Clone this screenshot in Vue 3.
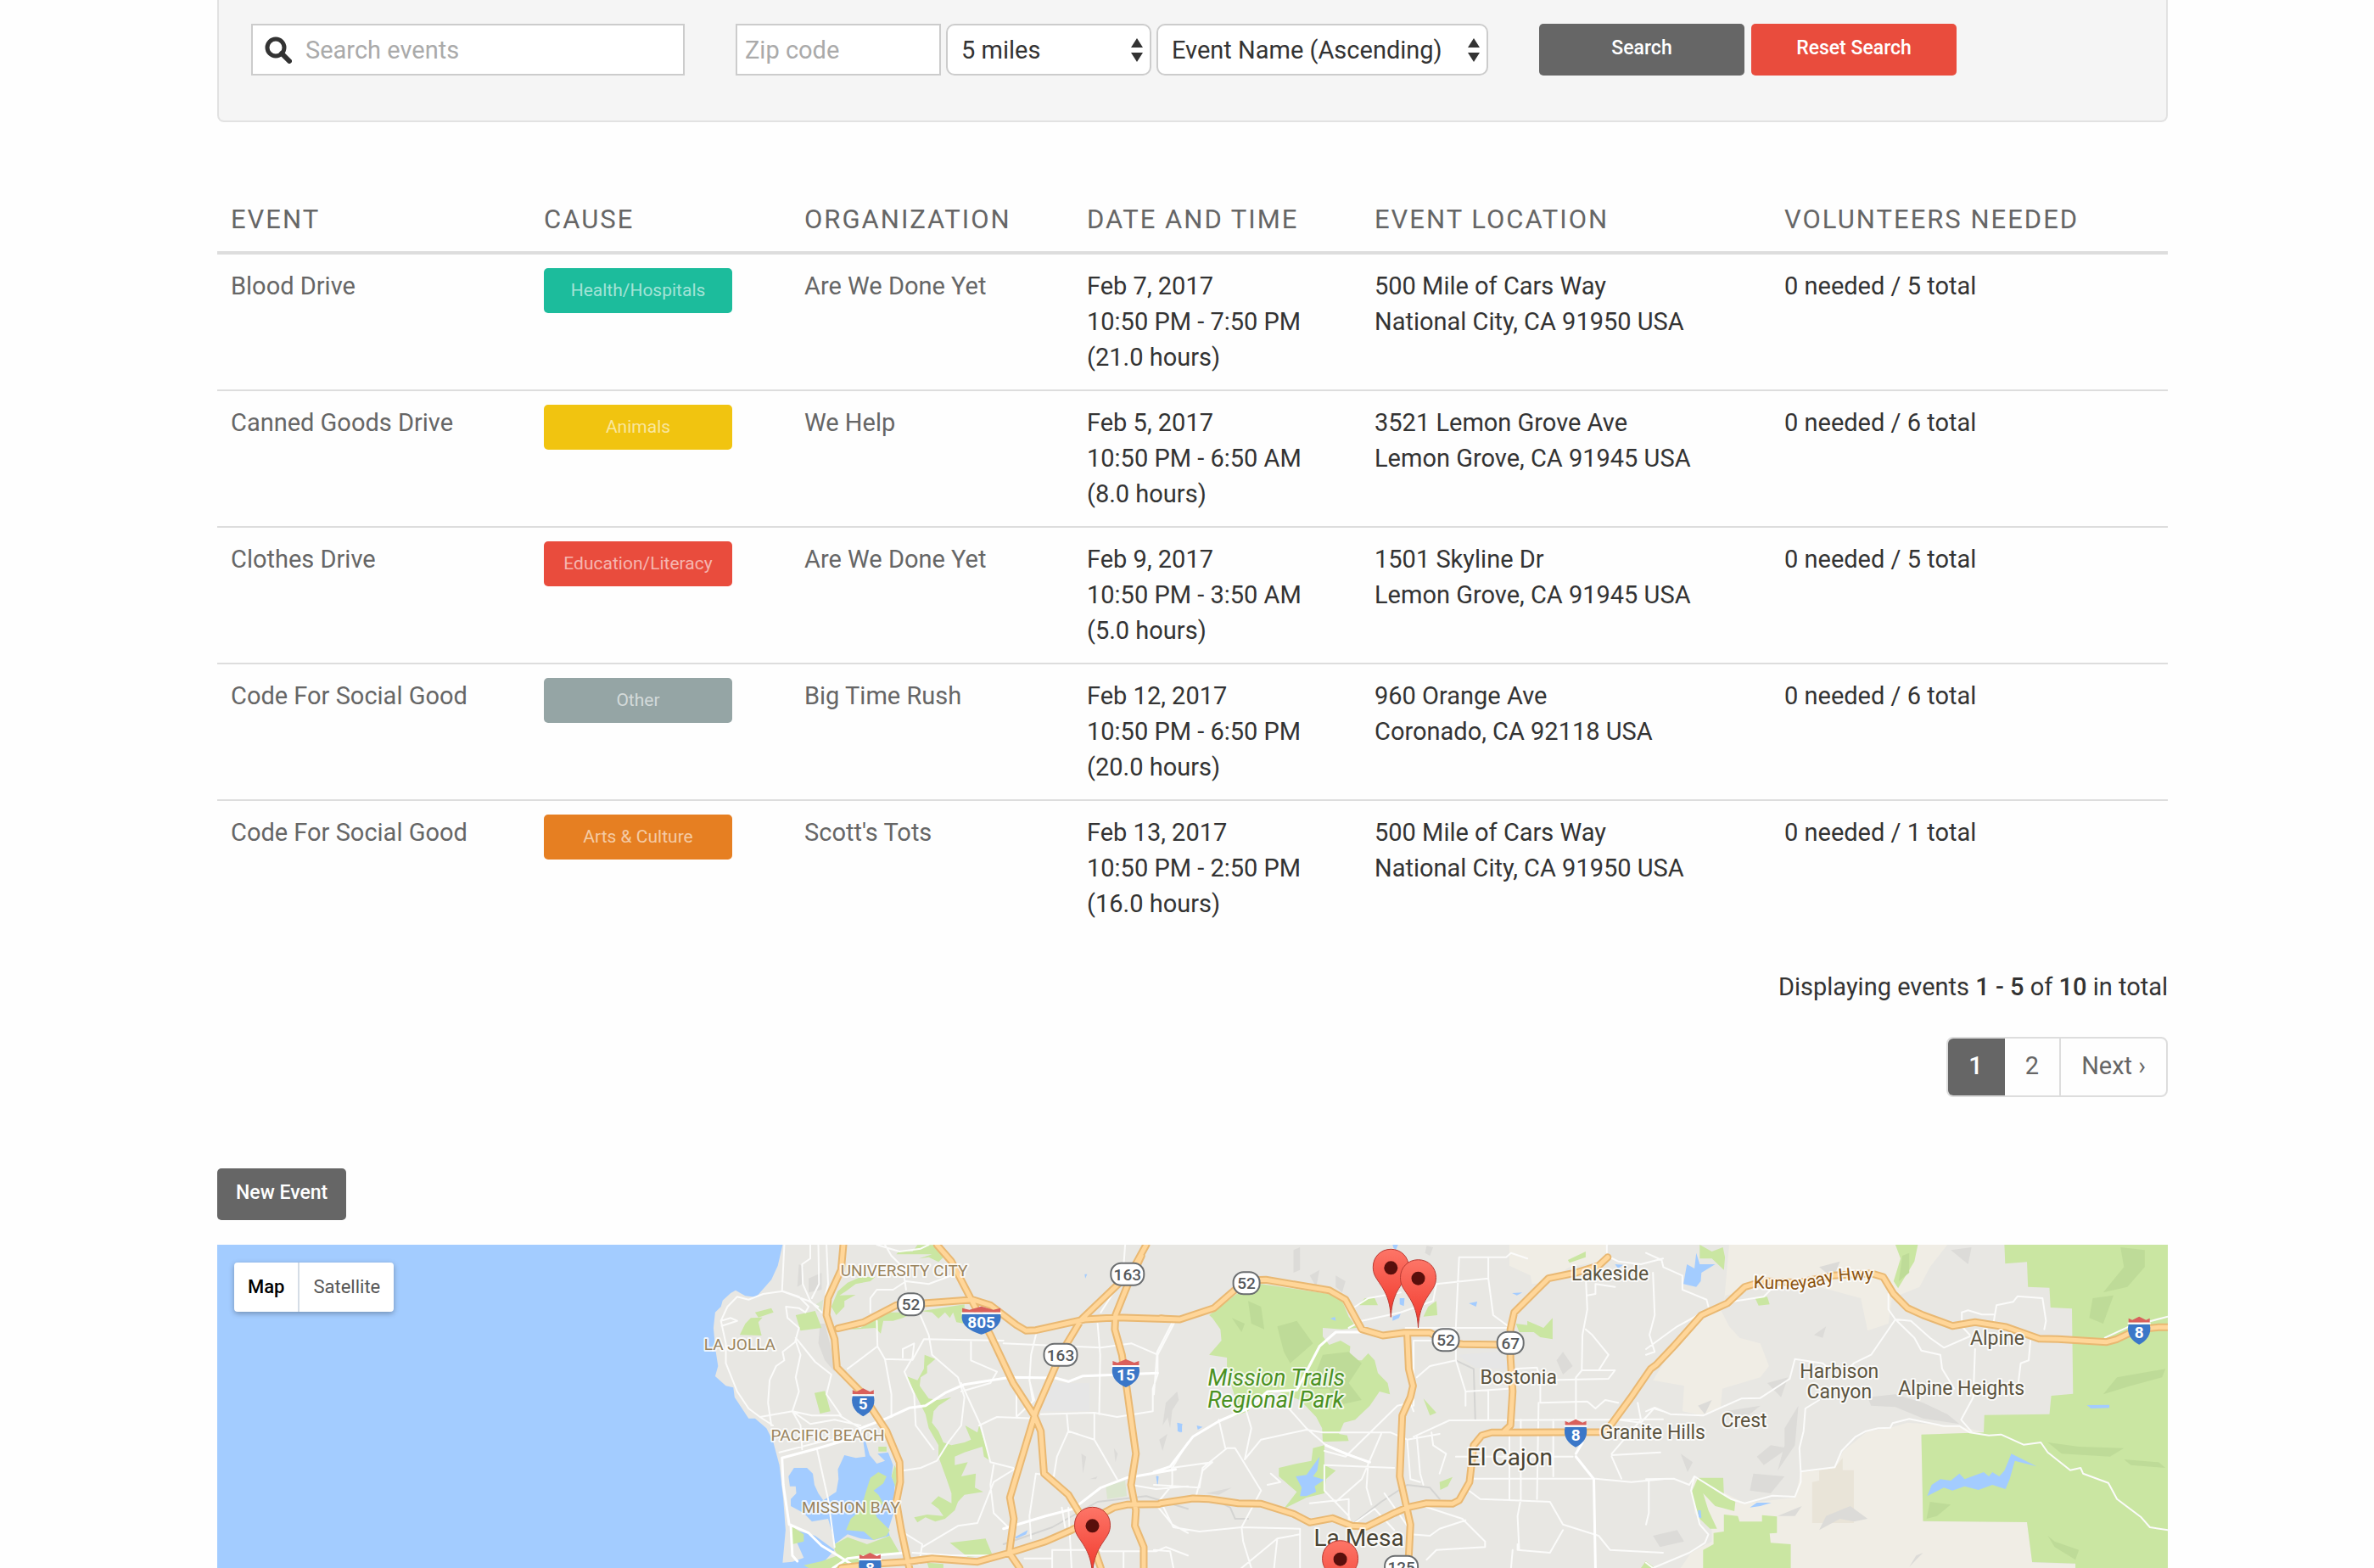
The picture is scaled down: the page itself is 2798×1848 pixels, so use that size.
<script setup>
import { ref } from 'vue'

const query = ref('')
const zip = ref('')
const distance = ref('5 miles')
const order = ref('Event Name (Ascending)')

const events = [
  { name: 'Blood Drive', cause: 'Health/Hospitals', tone: 'teal', org: 'Are We Done Yet', when: ['Feb 7, 2017', '10:50 PM - 7:50 PM', '(21.0 hours)'], where: ['500 Mile of Cars Way', 'National City, CA 91950 USA'], need: '0 needed / 5 total' },
  { name: 'Canned Goods Drive', cause: 'Animals', tone: 'yellow', org: 'We Help', when: ['Feb 5, 2017', '10:50 PM - 6:50 AM', '(8.0 hours)'], where: ['3521 Lemon Grove Ave', 'Lemon Grove, CA 91945 USA'], need: '0 needed / 6 total' },
  { name: 'Clothes Drive', cause: 'Education/Literacy', tone: 'red', org: 'Are We Done Yet', when: ['Feb 9, 2017', '10:50 PM - 3:50 AM', '(5.0 hours)'], where: ['1501 Skyline Dr', 'Lemon Grove, CA 91945 USA'], need: '0 needed / 5 total' },
  { name: 'Code For Social Good', cause: 'Other', tone: 'grey', org: 'Big Time Rush', when: ['Feb 12, 2017', '10:50 PM - 6:50 PM', '(20.0 hours)'], where: ['960 Orange Ave', 'Coronado, CA 92118 USA'], need: '0 needed / 6 total' },
  { name: 'Code For Social Good', cause: 'Arts & Culture', tone: 'orange', org: "Scott's Tots", when: ['Feb 13, 2017', '10:50 PM - 2:50 PM', '(16.0 hours)'], where: ['500 Mile of Cars Way', 'National City, CA 91950 USA'], need: '0 needed / 1 total' }
]

// The map is stored as three tiles (west, centre, east), each on its own grid.
const tiles = {
  w: { x: 544, k: 600 / 1568 },
  c: { x: 1104, k: 600 / 1568 },
  e: { x: 1684, k: 640 / 1568 }
}
const at = (t, x, y) => [Math.round((tiles[t].x + x * tiles[t].k) * 10) / 10, Math.round((y / 3 - 17) * 10) / 10]
// "w 10,20 30,40 e 5,6" -> path data; a tile letter switches the grid
const trace = (s) => {
  let t = 'w'
  const out = []
  for (const part of s.trim().split(/\s+/)) {
    if (tiles[part]) { t = part; continue }
    const [x, y] = part.split(',').map(Number)
    out.push(at(t, x, y).join(' '))
  }
  return 'M' + out.join('L')
}
const join = (list, close) => list.map((s) => trace(s) + (close ? 'Z' : '')).join('')

const land = join(['w 320,51 305,125 285,175 238,236 205,232 175,212 160,222 135,248 130,270 112,290 107,345 113,420 121,480 112,516 145,550 168,556 172,590 215,665 235,665 270,700 290,745 310,830 322,950 329,1060 320,1175 350,1172 385,1158 345,1055 420,1080 480,1130 430,1194 e 1507,1194 1507,51'], true)

const beige = join([
  'c 1095,51 1400,51 1380,110 1280,130 1210,185 1165,190 1160,160 1095,125',
  'e 240,51 870,51 820,130 790,200 710,240 700,330 640,355 620,240 500,200 300,210 230,230 215,280 240,340 270,380 330,400 355,480 330,520 220,560 215,630 165,655 105,640 110,550 20,530 70,430 150,330 225,260',
  'e 755,680 900,692 980,715 795,722 800,1030 1100,1030 1115,1175 1240,1180 1240,1194 100,1194 130,1140 190,1100 190,1060 140,1000 135,870 285,965 430,945 447,855 545,840 570,780 640,710 700,700'
], true)
const sand = join(['e 450,855 500,850 500,885 480,890 480,1035 600,1035 600,848 568,848 568,805 545,840'], true)

const parks = join([
  'w 235,290 285,275 292,290 245,308',
  'w 222,310 258,308 245,325 255,372 188,370 205,330',
  'w 360,300 420,285 440,345 375,355',
  'w 470,270 490,215 520,185 560,165 605,165 590,180 545,190 515,215 495,230 545,228 510,250 510,270 485,300 500,330',
  'w 480,345 560,345 600,315 650,290 690,290 750,285 880,262 880,330 855,325 845,290 835,310 820,290 800,312 780,290 740,285 690,310 660,320 630,320 622,365 605,345 540,350',
  'w 735,52 785,52 820,90 800,112 770,95 740,100 780,85 670,85 680,72 720,75',
  'w 418,575 450,568 467,640 435,648',
  'w 757,440 790,455 765,480 765,505 745,520 742,550 770,595 800,600 840,590 800,620 785,640 780,680 800,710 815,750 840,760 880,750 900,740 882,690 920,715 925,690 945,760 960,815 940,800 935,765 880,785 850,800 850,830 890,820 870,870 915,860 912,910 938,925 880,935 860,960 850,990 820,1020 790,1030 760,1015 735,1033 725,1015 765,1005 815,1010 800,985 777,965 800,940 840,965 840,930 825,880 800,800 800,760 770,700 760,650 725,570 700,515 735,530 755,490',
  'w 835,1105 945,1090 965,1145 890,1155',
  'w 615,765 640,765 640,782 615,782',
  'w 765,1175 815,1180 815,1194 770,1194',
  'w 655,870 665,830 675,860 670,920',
  'c 255,225 330,190 540,225 580,250 600,305 625,345 580,350 520,345 520,375 540,405 575,390 605,410 600,460 640,460 660,435 680,460 690,505 720,540 727,580 695,570 665,620 620,670 585,680 570,720 595,725 600,745 520,748 518,700 500,660 450,600 380,570 320,590 290,640 245,658 250,590 225,500 225,450 170,440 208,390 205,350 180,310 170,300',
  'c 490,770 525,760 525,830 560,850 530,880 525,930 470,945 400,985 440,925 385,870 385,840 440,825 485,815',
  'c 630,265 650,240 680,240 690,265',
  'c 830,305 845,270 870,250 873,300',
  'c 1115,330 1150,335 1150,320 1200,345 1228,310 1228,385 1190,378 1170,360 1125,360',
  'c 830,595 870,645 850,655',
  'c 880,890 920,872 905,905 882,918',
  'c 1275,105 1330,75 1330,95 1280,115',
  'c 1515,1170 1545,1194 1500,1194',
  'e 1035,51 1507,51 1507,1194 1240,1194 1240,1178 1115,1173 1100,1032 800,1028 795,722 975,715 977,653 1165,650 1170,585 1233,578 1230,277 1168,273 1165,203 1103,200 1100,112 1037,118',
  'e 155,51 190,75 222,60 228,95 225,140 190,100 155,100',
  'e 720,51 785,51 775,110 728,205 715,180 735,100',
  'e 195,1070 225,1065 225,1005 265,1010 270,1030 335,1030 335,1007 378,1012 378,1070 357,1072 360,1105 418,1110 418,1194 165,1194 165,1130 195,1110',
  'e 150,875 223,875 225,935 258,960 255,993 200,975 165,930 180,990 205,1055 185,1055 155,1020 130,930',
  'e 315,240 350,235 357,262 325,266'
], true)
const paleParks = join(['w 1315,905 1375,885 1380,940 1320,950', 'w 422,262 445,245 440,290 425,285'], true)
const greyLots = join(['w 1120,540 1265,540 1265,640 1110,640', 'c 935,440 1060,430 1090,470 1090,490 990,485'], true)

const islands = join([
  'w 615,855 640,870 630,895 600,920 615,935 630,965 600,985 610,1015 650,1060 640,1080 600,1095 570,1065 515,1060 530,1020 560,990 575,930 590,875',
  'w 480,1110 520,1085 580,1110 650,1080 680,1140 600,1150 560,1170 545,1194 400,1194 385,1184 440,1170 490,1150 480,1130',
  'w 345,1045 385,1075 385,1100 350,1110'
], true)

const water = join([
  'w 338,870 355,840 395,840 413,860 418,900 430,930 445,955 485,925 492,880 490,845 510,795 545,805 575,800 568,745 575,745 588,795 610,825 635,815 612,790 645,785 660,830 655,870 665,900 662,1000 645,1060 650,1080 600,1095 560,1090 520,1075 480,1110 470,1060 460,1020 410,1030 385,1000 345,975 345,950 362,930 360,905 342,905',
  'w 1535,680 1550,690 1550,715 1537,705', 'w 1470,870 1478,870 1475,905', 'w 1250,155 1258,155 1252,170',
  'w 1035,1085 1075,1060 1070,1075 1040,1090',
  'c 510,800 503,850 490,870 525,882 495,905 500,925 470,940 450,940 455,910 437,870 470,865',
  'c 735,305 760,295 755,310 735,320', 'c 757,240 772,240 770,268 757,262', 'c 735,51 752,51 745,70 738,62',
  'c 970,258 996,252 992,270', 'c 1103,222 1135,220 1118,230', 'c 73,680 88,685 82,715 73,710', 'c 132,690 150,695 135,705',
  'c 8,868 14,870 10,900', 'c 543,312 558,306 560,320', 'c 1420,120 1445,122 1430,135',
  'e 812,940 825,900 850,880 880,885 905,860 920,880 975,855 990,870 1000,855 1020,870 1035,850 1055,790 1128,835 1065,815 1050,880 1038,915 1000,900 960,918 920,905 885,920 860,910',
  'e 1273,618 1338,617 1338,628 1285,630', 'e 118,120 140,135 145,80 155,120 200,120 160,150 158,180 145,200 108,190',
  'e 300,980 320,963 362,963 330,975', 'e 150,990 158,990 160,1018 152,1015'
], true)

const shade = join([
  'c 520,440 600,430 640,470 600,540 640,600 560,620 540,560 480,560 500,500', 'c 290,250 330,270 340,350 300,330', 'c 380,340 440,320 490,400 420,470 400,430', 'c 240,310 280,330 270,360',
  'e 1370,60 1440,70 1440,130 1390,200 1320,220 1380,130', 'e 1290,240 1350,230 1320,330 1280,310', 'e 1320,580 1360,520 1500,490 1490,520 1400,550',
  'e 1160,750 1250,765 1380,770 1340,800 1200,790', 'e 1380,810 1480,820 1500,840 1400,830', 'e 740,90 760,80 760,150 730,180', 'e 1160,1080 1180,1100 1250,1130 1240,1165 1180,1120', 'e 820,960 880,970 840,1010 810,1020'
], true)
const relief = join([
  'w 435,330 450,330 470,420 480,500 450,460 430,400', 'w 370,120 385,130 380,190 365,200', 'w 400,170 440,150 440,210 400,220', 'w 1500,610 1535,570 1540,600 1490,690', 'w 1480,740 1505,720 1490,780', 'w 1340,770 1352,790 1345,820', 'w 1240,790 1255,800 1245,860', 'w 1265,880 1290,870 1285,880',
  'c 430,70 450,60 450,140 430,150', 'c 480,160 510,140 500,200', 'c 560,160 590,180 580,220 560,200', 'c 1240,460 1260,430 1290,480 1260,510', 'c 160,930 240,910 200,935', 'c 40,650 60,600 50,700', 'c 840,55 860,60 850,90 835,80',
  'e 400,700 440,620 430,760 380,850 400,760', 'e 640,590 720,580 800,610 870,650 905,685 800,665 720,625 650,620', 'e 320,800 360,760 410,770 340,830', 'e 310,860 400,870 360,930 300,920', 'e 520,1010 590,975 640,1020 600,1030 560,1020 500,1060', 'e 230,640 330,620 280,670', 'e 150,620 190,600 170,650', 'e 380,1010 450,975 430,1010', 'e 20,1080 90,1060 110,1100 40,1120', 'e 500,130 560,110 540,170', 'e 880,70 940,60 930,120', 'e 350,540 410,520 390,590', 'e 100,790 135,820 120,855', 'e 780,1150 800,1140 760,1190', 'e 485,370 520,340 510,380'
], true)

const streets = join([
  'w 325,51 318,215 400,250 430,270', 'w 405,51 405,100 380,120 382,190 405,250 440,290', 'w 430,51 432,190 410,240', 'w 455,51 460,190 450,240',
  'w 132,338 180,320 160,310 130,320 150,270 180,235 215,245 260,225 320,215 370,235 400,270 390,290 370,275 330,270 335,310 370,345 358,395 320,430 325,460 300,480 280,530 275,610 285,690',
  'w 130,320 145,400 145,470 180,570 215,630 250,660 290,690', 'w 250,660 350,640 410,655 495,655 560,700', 'w 360,390 375,440 360,520 370,570 350,640 375,690 380,775', 'w 360,380 420,465 470,510 455,580 500,655', 'w 350,640 405,685 480,670 560,690',
  'w 310,785 430,750 570,720', 'w 425,770 460,950 480,1120', 'w 610,320 612,410 520,490', 'w 612,410 635,455 720,458 755,385 1000,390', 'w 635,455 655,580 655,660', 'w 740,290 770,370 780,440 860,520 880,590 870,690 830,750 795,815 745,840 690,850',
  'w 690,450 690,420 725,400 720,450 695,500 725,580 730,690 785,775', 'w 590,290 590,240 610,210 660,210 700,180 770,190 840,160', 'w 635,51 655,90 690,130 700,210', 'w 610,51 680,75 745,65 770,51',
  'w 900,390 900,460 980,500 960,540 870,570', 'w 870,540 930,690 960,820 1030,840', 'w 1100,370 1085,440 1080,530 1090,600', 'w 1000,400 1300,415 1395,400 1475,440', 'w 1290,330 1298,440 1295,650', 'w 1300,290 1350,200 1370,130 1375,51',
  'w 925,690 980,660 1095,665', 'w 1115,650 1280,645 1350,660 1460,640 1460,560 1475,510', 'w 1280,645 1280,740 1350,880', 'w 1195,650 1200,710 1280,740', 'w 1200,710 1165,800 1155,870 1100,860 1080,1010 1085,1090', 'w 1475,510 1475,440 1525,330',
  'w 1080,530 1095,600 1040,660 1040,560', 'w 970,830 960,900 970,1000 1015,1050', 'w 1393,900 1470,915 1568,905', 'w 1568,750 1520,840 1520,900 1470,970 1520,1040 1568,1070', 'w 680,1060 750,1110 740,1180', 'w 750,1120 860,1045 920,1035 970,890 1040,840', 'w 1150,1194 1150,1130 1300,1130', 'w 1300,1135 1470,1135 1500,1120 1568,1150', 'w 1065,1160 1150,1160', 'w 1200,980 1210,1194', 'w 1370,1135 1370,1194', 'w 1180,980 1190,1050', 'w 720,1140 840,1150 1000,1150',
  'c 0,580 10,430 55,330', 'c 55,840 180,820 150,850 130,940', 'c 0,900 140,910 150,840 225,770 250,770 330,920 270,1050 275,1100 300,1194', 'c 30,980 60,1050 140,1065 270,1050 450,1055', 'c 200,670 220,770', 'c 280,620 300,700 280,810', 'c 400,610 470,700 530,760 660,820 655,910 670,970',
  'c 520,715 470,705 330,740 280,810', 'c 520,715 730,715 780,740 880,720', 'c 525,780 590,800 750,620 790,610 800,640', 'c 530,830 740,840', 'c 525,830 525,920 600,1010 610,1050', 'c 560,960 640,880 700,720', 'c 480,965 600,950 600,1050', 'c 350,900 390,890 360,860', 'c 780,740 790,880 820,890', 'c 810,730 820,860 830,900', 'c 855,715 860,760 900,790 880,860',
  'c 640,320 760,290 860,250 870,190 1030,170', 'c 620,270 660,240 760,220', 'c 930,340 940,95 1085,95 1100,80 1150,100', 'c 1030,95 1030,170 1045,300 1098,345', 'c 640,320 600,345', 'c 775,345 1095,345', 'c 800,390 860,390', 'c 800,620 800,390', 'c 810,520 850,480 930,460 930,350', 'c 930,460 960,570 960,620', 'c 960,570 1090,560', 'c 1030,570 1030,670', 'c 800,730 910,672 1568,668',
  'c 1110,490 1180,485 1190,530 1400,525 1420,495 1318,495', 'c 1190,530 1190,610 1335,605 1360,630 1390,600 1430,610', 'c 1185,610 1180,950', 'c 1230,670 1230,870', 'c 1300,520 1300,670', 'c 1095,700 1095,950', 'c 1130,670 1130,950 1120,1010 1125,1130', 'c 930,800 1290,800', 'c 970,920 1005,950 1220,960 1260,1040 1370,1080 1405,1130 1568,1140', 'c 980,878 1360,878 1470,890 1568,880', 'c 1410,800 1440,878', 'c 1410,795 1560,785',
  'c 1330,160 1335,280 1320,370 1318,495 1300,520', 'c 1330,350 1350,370 1400,440 1370,495', 'c 1335,230 1360,225 1360,190 1420,200', 'c 1395,51 1395,90 1430,110 1500,120 1568,100', 'c 830,975 950,1020 1020,1100 1020,1120 870,1130 840,1165', 'c 790,1075 850,1080 880,1055 960,1025', 'c 1120,1110 1120,1130 1220,1140 1260,1060', 'c 710,930 790,1060', 'c 600,1050 680,985 740,1060', 'c 0,1130 50,1135 60,1194', 'c 270,1194 380,1090 450,1075', 'c 450,1055 450,1194', 'c 380,1090 370,1194', 'c 1105,1130 1100,1194', 'c 1430,670 1500,680 1540,630 1568,640', 'c 1490,610 1500,670 1410,790',
  'e 0,80 45,105 50,130 105,160 105,210 175,245 180,270', 'e 20,150 25,300 10,370 25,430 0,440', 'e 0,420 90,340 150,300', 'e 180,280 260,250 340,235 360,210 440,190', 'e 0,640 25,627 70,650 165,655 275,595 330,593 415,525 430,455 510,470 560,520 600,470 650,440 720,315 765,320 820,380 860,415 935,375',
  'e 700,225 700,280 720,315 775,380 795,425 850,440 855,490 890,560', 'e 950,420 945,590 910,670 940,712', 'e 1110,390 1105,460 1082,470 1075,540', 'e 1150,350 1155,320 1145,240 1073,233 1060,253 1012,265 1003,330', 'e 1003,298 970,298 930,283 912,290 912,340 935,370', 'e 500,600 460,630 455,710 443,770 447,855 447,890 430,942 365,938 285,965 245,950 140,870 125,900 80,878 0,880', 'e 447,853 545,838 565,780 605,730 635,710 670,700 705,698 712,682 760,667 860,692 905,692 935,715 990,725 1025,722 1090,758 1140,750 1160,785 1225,848 1255,840 1262,860 1335,893 1360,950 1430,1015 1455,1050 1507,1060', 'e 140,870 130,920 155,1040 180,1075 170,1105 125,1140 20,1194 0,1175', 'e 8,880 8,1000 0,1040', 'e 1325,380 1390,343 1460,320 1507,305'
])
const avenues = join([
  'w 318,805 430,770 550,730 560,700 640,665 710,628 760,620 820,575 880,545 1020,520 1160,522 1200,535 1245,515 1475,505', 'w 1000,1055 1130,1010 1215,985 1300,910 1380,875 1530,845',
  'w 345,1042 400,1070 440,1115 490,1150 545,1190', 'w 318,805 322,900 340,1040', 'w 345,1042 350,1150 365,1170', 'w 475,1194 520,1160 600,1150 700,1140',
  'c 0,855 50,835 120,730 200,675 290,630 350,570 440,565 510,410 560,360 640,360', 'c 530,760 590,790 665,820', 'c 1300,800 1355,880 1360,1194', 'c 1300,790 1320,750'
])
const rails = join(['w 1000,1110 1150,1050 1290,960 1440,940 1568,985', 'c 200,960 235,980 250,1020 290,1020', 'c 610,1040 700,960 780,900 850,910 880,950', 'c 930,460 985,490 990,670'])

const highways = join([
  'w 507,51 500,140 460,240 455,300 480,385 487,485 560,570 600,640 640,710 680,820 682,890 670,960 685,1060 710,1194',
  'w 490,347 570,325 670,265 800,254 905,245 960,265 1040,335 1070,355 1100,353 1250,315 1350,308 1540,315 c 20,312 80,315 185,275 255,205 300,176 345,175 540,212 590,245 640,350 705,372 770,362 850,362 900,395 950,403 1098,405',
  'w 795,51 840,110 910,265 960,370 1030,540 1095,655 1115,710 1125,860 1200,935 1250,1030 1300,1194',
  'w 1440,51 1395,145 1240,315 1180,430 1100,640 1020,945 1032,1020 1018,1140 1050,1194',
  'w 1425,90 1380,200 1345,300 1343,350 1365,440 1380,560 1408,790 1393,900 1408,990 1405,1045 1432,1120 1432,1194',
  'w 500,1194 600,1180 700,1172 780,1160 920,1172 1020,1140 1130,1100 1210,1060 1340,980 1380,970 1480,968 c 20,965 120,948 170,950 260,965 330,967 430,1003 480,1033 550,1018 610,1045 655,1048 740,1000 780,980 840,965 920,967 940,955 972,890 985,760 1010,725 1040,715 1380,713 1400,700 1470,590 1530,490 e 30,475 80,410 160,300 235,258 285,200 340,180 440,185 540,160 650,152 685,165 715,225 755,275 800,300 885,338 950,325 1040,342 1135,383 1190,385 1330,395 1360,385 1420,350 1480,343 1515,343',
  'c 1398,95 1370,125 1300,150 1215,170 1110,290 1098,350 1098,450 1105,570 1098,690 1075,715',
  'c 780,362 785,490 798,550 790,590 765,655 757,870 790,1040 785,1150'
])

const spot = (t, x, y) => { const [px, py] = at(t, x, y); return { x: px, y: py } }
const labels = [
  { text: 'UNIVERSITY CITY', kind: 'area', ...spot('w', 694, 162) },
  { text: 'LA JOLLA', kind: 'area', ...spot('w', 188, 422) },
  { text: 'PACIFIC BEACH', kind: 'area', ...spot('w', 459, 743) },
  { text: 'MISSION BAY', kind: 'area', ...spot('w', 530, 1000) },
  { text: 'Mission Trails', kind: 'park', ...spot('c', 377, 548) },
  { text: 'Regional Park', kind: 'park', ...spot('c', 375, 627) },
  { text: 'Lakeside', kind: 'town', ...spot('c', 1405, 176) },
  { text: 'Bostonia', kind: 'town', ...spot('c', 1123, 542) },
  { text: 'El Cajon', kind: 'city', ...spot('c', 1096, 832) },
  { text: 'La Mesa', kind: 'city', ...spot('c', 631, 1115) },
  { text: 'Granite Hills', kind: 'town', ...spot('e', 19, 738) },
  { text: 'Crest', kind: 'town', ...spot('e', 283, 695) },
  { text: 'Harbison', kind: 'town', ...spot('e', 558, 523) },
  { text: 'Canyon', kind: 'town', ...spot('e', 558, 593) },
  { text: 'Alpine Heights', kind: 'town', ...spot('e', 911, 582) },
  { text: 'Alpine', kind: 'town', ...spot('e', 1014, 405) }
]
const stateRoutes = [
  { n: '52', w: 33, ...spot('w', 715, 262) }, { n: '163', w: 41, ...spot('w', 1382, 155) }, { n: '163', w: 41, ...spot('w', 1176, 440) },
  { n: '52', w: 33, ...spot('c', 285, 187) }, { n: '52', w: 33, ...spot('c', 899, 388) }, { n: '67', w: 33, ...spot('c', 1098, 398) },
  { n: '125', w: 41, ...spot('c', 762, 1190) }
]
const interstates = [
  { n: '805', w: 47, ...spot('w', 932, 320) }, { n: '15', w: 33, ...spot('w', 1377, 507) }, { n: '5', w: 27, ...spot('w', 568, 610) },
  { n: '8', w: 27, ...spot('w', 589, 1191) }, { n: '8', w: 27, ...spot('c', 1299, 719) }, { n: '8', w: 27, ...spot('e', 1424, 356) }
]
const crown = (w) => { const h = w / 2; return `M${-h + 1} -10L${-h + 1} -15L${-h * 0.6} -13L${-h * 0.3} -15L0 -17L${h * 0.3} -15L${h * 0.6} -13L${h - 1} -15L${h - 1} -10Z` }
const shield = (w) => { const h = w / 2; return `M${-h + 1} -8H${h - 1}C${h + 2} 4 ${h * 0.6} 12 0 16C${-h * 0.6} 12 ${-h - 2} 4 ${-h + 1} -8Z` }
const pins = [spot('w', 1274, 1045), spot('c', 730, 133), spot('c', 814, 170), spot('c', 574, 1163)]
const hwyPath = trace('e 310,205 370,207 430,209 480,202 540,183 600,176 660,176')
</script>

<template>
  <main class="page">
    <form class="filters" @submit.prevent>
      <label class="search-box">
        <svg class="glass" viewBox="0 0 32 32" aria-hidden="true">
          <circle cx="13" cy="13" r="10" fill="none" stroke="#333" stroke-width="5" />
          <path d="M20 20L29 29" stroke="#333" stroke-width="6" stroke-linecap="round" />
        </svg>
        <input v-model="query" type="text" placeholder="Search events" aria-label="Search events" />
      </label>
      <div class="group">
        <input v-model="zip" class="zip" type="text" placeholder="Zip code" aria-label="Zip code" />
        <div class="pick">
          <select v-model="distance" class="miles" aria-label="Distance">
            <option>5 miles</option>
            <option>10 miles</option>
          </select>
          <svg class="arrows" viewBox="0 0 14 28" aria-hidden="true"><path d="M7 0L14 11H0ZM0 17H14L7 28Z" fill="#333" /></svg>
        </div>
        <div class="pick">
          <select v-model="order" class="order" aria-label="Sort order">
            <option>Event Name (Ascending)</option>
            <option>Event Name (Descending)</option>
          </select>
          <svg class="arrows" viewBox="0 0 14 28" aria-hidden="true"><path d="M7 0L14 11H0ZM0 17H14L7 28Z" fill="#333" /></svg>
        </div>
      </div>
      <div class="group actions">
        <button class="btn wide" type="submit">Search</button>
        <button class="btn wide danger" type="reset">Reset Search</button>
      </div>
    </form>

    <table class="events">
      <colgroup>
        <col class="c-event" /><col class="c-cause" /><col class="c-org" /><col class="c-date" /><col class="c-place" /><col />
      </colgroup>
      <thead>
        <tr>
          <th>EVENT</th><th>CAUSE</th><th>ORGANIZATION</th><th>DATE AND TIME</th><th>EVENT LOCATION</th><th>VOLUNTEERS NEEDED</th>
        </tr>
      </thead>
      <tbody>
        <tr v-for="(e, i) in events" :key="i">
          <td><a href="#">{{ e.name }}</a></td>
          <td><span class="cause" :class="e.tone">{{ e.cause }}</span></td>
          <td><a href="#">{{ e.org }}</a></td>
          <td><div v-for="l in e.when" :key="l">{{ l }}</div></td>
          <td><div v-for="l in e.where" :key="l">{{ l }}</div></td>
          <td>{{ e.need }}</td>
        </tr>
      </tbody>
    </table>

    <p class="summary">Displaying events <b>1 - 5</b> of <b>10</b> in total</p>
    <nav class="pager" aria-label="Pages">
      <a class="current" href="#">1</a><a href="#">2</a><a href="#">Next ›</a>
    </nav>

    <button class="btn new" type="button">New Event</button>

    <section class="map" aria-label="Event map">
      <svg class="chart" viewBox="0 0 2299 381" preserveAspectRatio="xMidYMin slice">
        <defs>
          <linearGradient id="pinFill" x1="0" y1="0" x2="0" y2="1">
            <stop offset="0" stop-color="#fd7567" /><stop offset="1" stop-color="#f0372b" />
          </linearGradient>
          <path id="hwyLine" :d="hwyPath" />
        </defs>
        <rect width="2299" height="381" fill="#a3ccff" />
        <path :d="land" fill="#e8e7e3" />
        <path :d="beige" fill="#f0ede5" />
        <path :d="sand" fill="#e9e4d8" />
        <path :d="greyLots" fill="#e6e6e6" />
        <path :d="relief" fill="#dcdbd8" />
        <path :d="parks" fill="#cae6a2" />
        <path :d="paleParks" fill="#dbe6cf" />
        <path :d="shade" fill="#bedb98" />
        <path :d="water" fill="#a3ccff" />
        <path :d="islands" fill="#cae6a2" />
        <g fill="none" stroke-linejoin="round" stroke-linecap="round">
          <path :d="rails" stroke="#d4d4d2" stroke-width="2" />
          <path :d="streets" stroke="#fbfbfa" stroke-width="2" />
          <path :d="avenues" stroke="#fff" stroke-width="3" />
          <path :d="highways" stroke="#e9b872" stroke-width="9" />
          <path :d="highways" stroke="#ffd699" stroke-width="5" />
        </g>
        <g class="labels">
          <text v-for="l in labels" :key="l.text" :x="l.x" :y="l.y" :class="l.kind">{{ l.text }}</text>
          <text class="road"><textPath href="#hwyLine">Kumeyaay Hwy</textPath></text>
        </g>
        <g v-for="(r, i) in stateRoutes" :key="'s' + i" class="route" :transform="`translate(${r.x} ${r.y})`">
          <rect :x="-r.w / 2 + 1" y="-13" :width="r.w - 2" height="26" rx="12" fill="#fff" stroke="#6b6e70" stroke-width="2" />
          <text y="7">{{ r.n }}</text>
        </g>
        <g v-for="(r, i) in interstates" :key="'i' + i" class="route us" :transform="`translate(${r.x} ${r.y})`">
          <path :d="crown(r.w)" fill="#d9605c" />
          <path :d="shield(r.w)" fill="#3b77c8" />
          <path :d="`M${-r.w / 2} -9H${r.w / 2}`" stroke="#fff" stroke-width="2" />
          <text y="8">{{ r.n }}</text>
        </g>
        <g v-for="(p, i) in pins" :key="'p' + i" :transform="`translate(${p.x} ${p.y})`">
          <path d="M0 58C-1 36 -8 26 -14 17C-18 11 -21 7 -21 -1C-21 -13 -12 -22 0 -22C12 -22 21 -13 21 -1C21 7 18 11 14 17C8 26 1 36 0 58Z" fill="url(#pinFill)" stroke="#b93a32" stroke-width="1" />
          <circle r="8" fill="#590f0c" />
        </g>
      </svg>
      <div class="map-type">
        <button class="on" type="button">Map</button>
        <button type="button">Satellite</button>
      </div>
    </section>
  </main>
</template>

<style>
body {
  margin: 0;
  background: #fefefe;
}
</style>

<style scoped>
.page,
.page * {
  box-sizing: border-box;
}
.page {
  padding: 0 243px 0 256px;
  font-family: Roboto, "Liberation Sans", sans-serif;
  font-size: 29px;
  line-height: 42px;
  color: #333;
}
input,
select,
button {
  font: inherit;
  color: inherit;
  margin: 0;
}
a {
  color: #666;
  text-decoration: none;
}
.filters {
  display: flex;
  gap: 60px;
  padding: 28px 38px 53px;
  background: #f5f5f5;
  border: 2px solid #e2e2e2;
  border-top: 0;
  border-radius: 0 0 8px 8px;
}
.group {
  display: flex;
  gap: 6px;
}
.group.actions {
  gap: 8px;
}
.search-box {
  display: flex;
  align-items: center;
  gap: 16px;
  width: 511px;
  height: 61px;
  padding: 0 14px;
  background: #fff;
  border: 2px solid #ccc;
}
.glass {
  width: 32px;
  height: 32px;
  flex: none;
}
.search-box input {
  flex: 1;
  min-width: 0;
  border: 0;
  padding: 0;
  outline: 0;
  background: none;
}
::placeholder {
  color: #aaa;
  opacity: 1;
}
.zip {
  width: 242px;
  height: 61px;
  padding: 0 9px;
  background: #fff;
  border: 2px solid #ccc;
}
.pick {
  position: relative;
}
select {
  appearance: none;
  height: 61px;
  padding: 0 16px;
  background: #fff;
  border: 2px solid #ccc;
  border-radius: 10px;
}
.miles {
  width: 242px;
}
.order {
  width: 391px;
}
.arrows {
  position: absolute;
  right: 10px;
  top: 17px;
  width: 14px;
  height: 28px;
  pointer-events: none;
}
.btn {
  height: 61px;
  padding: 0 22px 4px;
  border: 0;
  border-radius: 5px;
  background: #666;
  color: #fff;
  font-size: 23px;
  font-weight: 500;
  line-height: 30px;
}
.wide {
  width: 242px;
  padding: 0 0 4px;
}
.danger {
  background: #e94c3d;
}
.events {
  width: 100%;
  margin-top: 78px;
  table-layout: fixed;
  border-collapse: separate;
  border-spacing: 0;
}
.c-event {
  width: 369px;
}
.c-cause {
  width: 307px;
}
.c-org {
  width: 333px;
}
.c-date {
  width: 339px;
}
.c-place {
  width: 483px;
}
th {
  padding: 16px;
  text-align: left;
  font-size: 31px;
  font-weight: 400;
  letter-spacing: 2px;
  color: #666;
  white-space: nowrap;
  border-bottom: 4px solid #ddd;
}
td {
  padding: 16px 16px 17px;
  vertical-align: top;
  border-bottom: 2px solid #ddd;
}
tbody tr:last-child td {
  border-bottom: 0;
}
.cause {
  display: block;
  width: 222px;
  height: 53px;
  border-radius: 5px;
  font-size: 21px;
  line-height: 52px;
  text-align: center;
  color: rgba(255, 255, 255, 0.6);
}
.teal {
  background: #1cbc9c;
}
.yellow {
  background: #f1c410;
}
.red {
  background: #e94c3d;
}
.grey {
  background: #95a5a5;
}
.orange {
  background: #e67f22;
}
.summary {
  margin: 39px 0 38px;
  text-align: right;
}
.summary b {
  font-weight: 500;
}
.pager {
  display: flex;
  width: max-content;
  margin-left: auto;
  border: 2px solid #ddd;
  border-radius: 8px;
  overflow: hidden;
}
.pager a {
  padding: 11px 24px 14px;
  border-left: 2px solid #ddd;
}
.pager a.current {
  margin: -2px 0 -2px -2px;
  padding: 13px 26px 16px;
  border: 0;
  background: #666;
  color: #fff;
  font-weight: 500;
}
.pager a.current + a {
  border-left: 0;
}
.new {
  display: block;
  margin: 84px 0 29px;
}
.map {
  position: relative;
  height: 381px;
  overflow: hidden;
}
.chart {
  display: block;
  width: 100%;
  height: 100%;
}
.labels text {
  text-anchor: middle;
  paint-order: stroke;
  stroke: rgba(255, 255, 255, 0.8);
  stroke-width: 4px;
  stroke-linejoin: round;
}
.labels .area {
  font-size: 19px;
  fill: #9a845e;
}
.labels .park {
  font-size: 27px;
  font-style: italic;
  fill: #4b9123;
}
.labels .town {
  font-size: 23px;
  fill: #5c5440;
}
.labels .city {
  font-size: 28px;
  fill: #4a4433;
}
.labels .road {
  text-anchor: start;
  font-size: 21px;
  fill: #8b5412;
}
.route text {
  text-anchor: middle;
  font-size: 19px;
  font-weight: 500;
  fill: #55585b;
}
.route.us text {
  font-weight: 700;
  fill: #fff;
}
.map-type {
  position: absolute;
  left: 20px;
  top: 21px;
  display: flex;
  border-radius: 4px;
  background: #fff;
  box-shadow: 0 2px 6px rgba(0, 0, 0, 0.3);
}
.map-type button {
  height: 58px;
  padding: 0 16px;
  border: 0;
  background: none;
  font-size: 22px;
  line-height: 30px;
  color: #565656;
}
.map-type .on {
  border-right: 2px solid #d5dde6;
  color: #000;
  font-weight: 500;
}
</style>
